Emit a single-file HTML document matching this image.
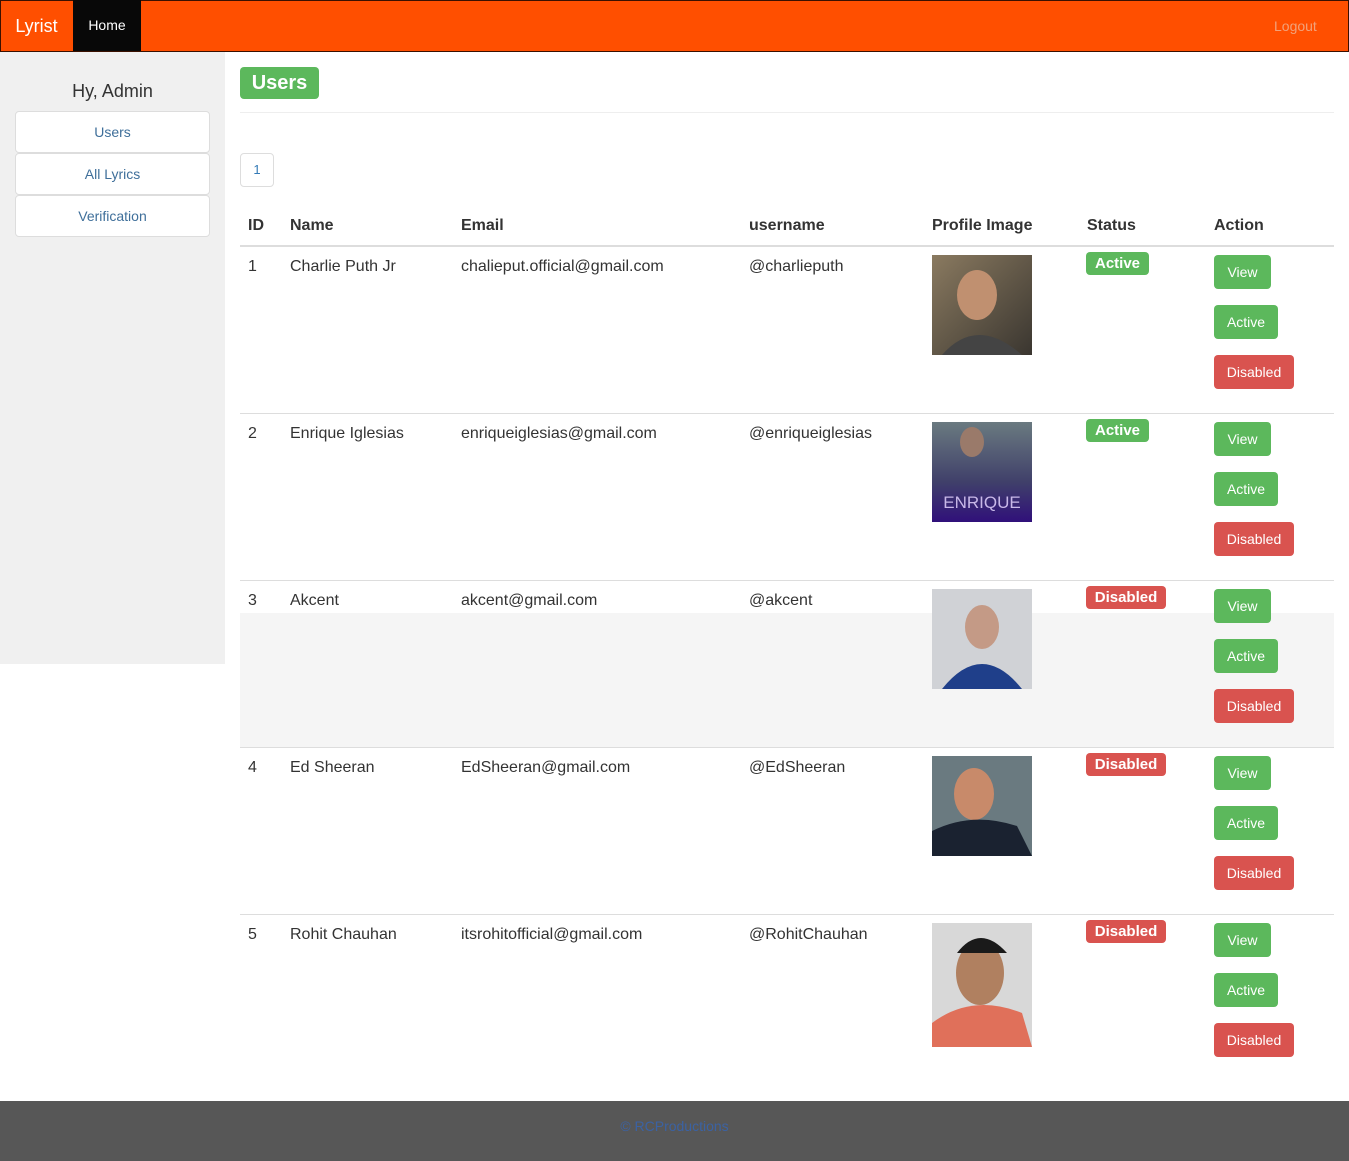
<!DOCTYPE html>
<html><head><meta charset="utf-8"><style>
*{box-sizing:border-box;margin:0;padding:0}
body{width:1349px;height:1161px;position:relative;font-family:"Liberation Sans",Arial,sans-serif;background:#fff;color:#333;overflow:hidden}
.a{position:absolute}
.nav{left:0;top:0;width:1349px;height:52px;background:#ff4f00;border:1px solid #3a1000}
.brand{left:0;top:1px;width:73px;height:51px;color:#fff;font-size:18px;line-height:51px;text-align:center}
.home{left:73px;top:0;width:68px;height:51px;background:#080808;color:#fff;font-size:14px;line-height:51px;text-align:center}
.logout{left:1274px;top:1px;line-height:51px;color:#f2a27a;font-size:14px}
.side{left:0;top:52px;width:225px;height:612px;background:#f0f0f0}
.hy{left:0;top:81px;width:225px;text-align:center;font-size:18px;color:#333}
.sb{left:15px;width:195px;height:42px;background:#fff;border:1px solid #ddd;border-radius:4px;text-align:center;line-height:40px;color:#3f6f9a;font-size:14px}
.title{left:240px;top:67px;width:79px;height:32px;background:#5cb85c;color:#fff;font-weight:bold;font-size:20px;line-height:32px;text-align:center;border-radius:4px}
.hr{left:240px;top:112px;width:1094px;height:1px;background:#eee}
.pg{left:240px;top:153px;width:34px;height:34px;border:1px solid #ddd;border-radius:4px;color:#337ab7;font-size:13px;text-align:center;line-height:32px}
.th{top:217px;font-weight:bold;font-size:16px;color:#333}
.line{left:240px;width:1094px;height:1px;background:#ddd}
.td{font-size:16px;color:#333}
.lab{height:23px;border-radius:4px;color:#fff;font-weight:bold;font-size:15px;line-height:23px;text-align:center}
.g{background:#5cb85c}.r{background:#d9534f}
.btn{height:34px;border-radius:4px;color:#fff;font-size:14px;line-height:34px;text-align:center}
.foot{left:0;top:1101px;width:1349px;height:60px;background:#575757;text-align:center;line-height:50px;color:#3b62a3;font-size:14px}
</style></head><body>
<div class="a nav"></div>
<div class="a brand">Lyrist</div>
<div class="a home">Home</div>
<div class="a logout">Logout</div>
<div class="a side"></div>
<div class="a hy">Hy, Admin</div>
<div class="a sb" style="top:111px">Users</div>
<div class="a sb" style="top:153px">All Lyrics</div>
<div class="a sb" style="top:195px">Verification</div>
<div class="a title">Users</div>
<div class="a hr"></div>
<div class="a pg">1</div>
<div class="a" style="left:240px;top:613px;width:1094px;height:134px;background:#f5f5f5"></div>
<div class="a th" style="left:248px">ID</div>
<div class="a th" style="left:290px">Name</div>
<div class="a th" style="left:461px">Email</div>
<div class="a th" style="left:749px">username</div>
<div class="a th" style="left:932px">Profile Image</div>
<div class="a th" style="left:1087px">Status</div>
<div class="a th" style="left:1214px">Action</div>
<div class="a line" style="top:245px;height:2px"></div>

<div class="a td" style="left:248px;top:258px">1</div><div class="a td" style="left:290px;top:258px">Charlie Puth Jr</div><div class="a td" style="left:461px;top:258px">chalieput.official@gmail.com</div><div class="a td" style="left:749px;top:258px">@charlieputh</div>
<svg class="a" style="left:932px;top:255px" width="100" height="100"><defs><linearGradient id="g1" x1="0" y1="0" x2="1" y2="1"><stop offset="0" stop-color="#8a7a60"/><stop offset="1" stop-color="#3a3630"/></linearGradient></defs><rect width="100" height="100" fill="url(#g1)"/><ellipse cx="45" cy="40" rx="20" ry="25" fill="#c09070"/><path d="M10 100 Q45 60 90 100Z" fill="#444"/></svg>
<div class="a lab g" style="left:1086px;top:252px;width:63px">Active</div>
<div class="a line" style="top:413px"></div>

<div class="a td" style="left:248px;top:425px">2</div><div class="a td" style="left:290px;top:425px">Enrique Iglesias</div><div class="a td" style="left:461px;top:425px">enriqueiglesias@gmail.com</div><div class="a td" style="left:749px;top:425px">@enriqueiglesias</div>
<svg class="a" style="left:932px;top:422px" width="100" height="100"><defs><linearGradient id="g2" x1="0" y1="0" x2="0" y2="1"><stop offset="0" stop-color="#6a7a80"/><stop offset="0.6" stop-color="#40406a"/><stop offset="1" stop-color="#30107a"/></linearGradient></defs><rect width="100" height="100" fill="url(#g2)"/><ellipse cx="40" cy="20" rx="12" ry="15" fill="#9a7a6a"/><text x="50" y="86" fill="#c8b8e8" font-size="17" text-anchor="middle" font-family="Liberation Sans">ENRIQUE</text></svg>
<div class="a lab g" style="left:1086px;top:419px;width:63px">Active</div>
<div class="a line" style="top:580px"></div>

<div class="a td" style="left:248px;top:592px">3</div><div class="a td" style="left:290px;top:592px">Akcent</div><div class="a td" style="left:461px;top:592px">akcent@gmail.com</div><div class="a td" style="left:749px;top:592px">@akcent</div>
<svg class="a" style="left:932px;top:589px" width="100" height="100"><rect width="100" height="100" fill="#d0d2d6"/><ellipse cx="50" cy="38" rx="17" ry="22" fill="#c49a86"/><path d="M10 100 Q50 50 90 100Z" fill="#1f3f8a"/></svg>
<div class="a lab r" style="left:1086px;top:586px;width:80px">Disabled</div>
<div class="a line" style="top:747px"></div>

<div class="a td" style="left:248px;top:759px">4</div><div class="a td" style="left:290px;top:759px">Ed Sheeran</div><div class="a td" style="left:461px;top:759px">EdSheeran@gmail.com</div><div class="a td" style="left:749px;top:759px">@EdSheeran</div>
<svg class="a" style="left:932px;top:756px" width="100" height="100"><rect width="100" height="100" fill="#6a7a80"/><ellipse cx="42" cy="38" rx="20" ry="26" fill="#c88a6a"/><path d="M0 100 L0 75 Q40 55 85 70 L100 100Z" fill="#1a2230"/></svg>
<div class="a lab r" style="left:1086px;top:753px;width:80px">Disabled</div>
<div class="a line" style="top:914px"></div>

<div class="a td" style="left:248px;top:926px">5</div><div class="a td" style="left:290px;top:926px">Rohit Chauhan</div><div class="a td" style="left:461px;top:926px">itsrohitofficial@gmail.com</div><div class="a td" style="left:749px;top:926px">@RohitChauhan</div>
<svg class="a" style="left:932px;top:923px" width="100" height="124"><rect width="100" height="124" fill="#d8d8d8"/><ellipse cx="48" cy="50" rx="24" ry="32" fill="#b08060"/><path d="M25 30 Q48 0 75 30 Z" fill="#1a1a1a"/><path d="M0 124 L0 100 Q40 70 90 90 L100 124Z" fill="#e0705a"/></svg>
<div class="a lab r" style="left:1086px;top:920px;width:80px">Disabled</div>

<div class="a btn g" style="left:1214px;top:255px;width:57px">View</div><div class="a btn g" style="left:1214px;top:305px;width:64px">Active</div><div class="a btn r" style="left:1214px;top:355px;width:80px">Disabled</div>
<div class="a btn g" style="left:1214px;top:422px;width:57px">View</div><div class="a btn g" style="left:1214px;top:472px;width:64px">Active</div><div class="a btn r" style="left:1214px;top:522px;width:80px">Disabled</div>
<div class="a btn g" style="left:1214px;top:589px;width:57px">View</div><div class="a btn g" style="left:1214px;top:639px;width:64px">Active</div><div class="a btn r" style="left:1214px;top:689px;width:80px">Disabled</div>
<div class="a btn g" style="left:1214px;top:756px;width:57px">View</div><div class="a btn g" style="left:1214px;top:806px;width:64px">Active</div><div class="a btn r" style="left:1214px;top:856px;width:80px">Disabled</div>
<div class="a btn g" style="left:1214px;top:923px;width:57px">View</div><div class="a btn g" style="left:1214px;top:973px;width:64px">Active</div><div class="a btn r" style="left:1214px;top:1023px;width:80px">Disabled</div>

<div class="a foot">© RCProductions</div>
</body></html>
